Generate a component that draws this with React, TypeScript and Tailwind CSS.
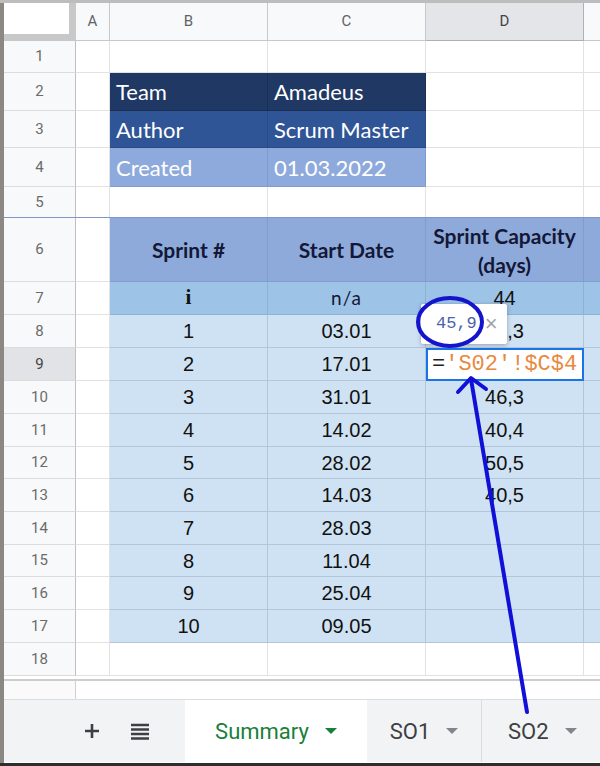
import type { ReactNode } from "react";

type Sprint = { n: number; date: string; cap: string; h: string };

// D9 is empty here: the cell editor draws it
const sprints: Sprint[] = [
  { n: 1, date: "03.01", cap: "45,3", h: "h-[33px]" },
  { n: 2, date: "17.01", cap: "", h: "h-[33px]" },
  { n: 3, date: "31.01", cap: "46,3", h: "h-[33px]" },
  { n: 4, date: "14.02", cap: "40,4", h: "h-[33px]" },
  { n: 5, date: "28.02", cap: "50,5", h: "h-[32px]" },
  { n: 6, date: "14.03", cap: "40,5", h: "h-[33px]" },
  { n: 7, date: "28.03", cap: "", h: "h-[33px]" },
  { n: 8, date: "11.04", cap: "", h: "h-[32px]" },
  { n: 9, date: "25.04", cap: "", h: "h-[33px]" },
  { n: 10, date: "09.05", cap: "", h: "h-[33px]" },
];

const info = [
  { label: "Team", value: "Amadeus", h: "h-[38px]", bg: "bg-[#1f3864]", line: "border-[#1a2f55]" },
  { label: "Author", value: "Scrum Master", h: "h-[37px]", bg: "bg-[#2f5597]", line: "border-[#284a85]" },
  { label: "Created", value: "01.03.2022", h: "h-[39px]", bg: "bg-[#8eaadc]", line: "border-[#7f9bd0]" },
];

function RowHead({ n, active }: { n: number; active?: boolean }) {
  return (
    <div
      className={`w-[72px] shrink-0 flex items-center justify-center border-r border-b border-r-[#c0c0c0] border-b-[#dcdcdc] text-[15px] font-['Roboto',Arial,sans-serif] ${
        active ? "bg-[#e1e3e6] text-[#444]" : "bg-[#f8f9fa] text-[#6b6b6b]"
      }`}
    >
      {n}
    </div>
  );
}

function Blank({ w }: { w: string }) {
  return <div className={`${w} shrink-0 bg-white border-r border-b border-[#e2e2e2]`} />;
}

function BlankRow({ n, h }: { n: number; h: string }) {
  return (
    <div className={`flex ${h}`}>
      <RowHead n={n} />
      <Blank w="w-[34px]" />
      <Blank w="w-[158px]" />
      <Blank w="w-[158px]" />
      <Blank w="w-[158px]" />
      <div className="flex-1 bg-white border-b border-[#e2e2e2]" />
    </div>
  );
}

function Tcell({ w, className, children }: { w: string; className: string; children?: ReactNode }) {
  return (
    <div className={`${w} shrink-0 flex items-center justify-center border-r border-b ${className}`}>
      {children}
    </div>
  );
}

function Caret({ color }: { color: string }) {
  return (
    <svg width="12" height="6" viewBox="0 0 12 6">
      <polygon points="0,0 12,0 6,6" fill={color} />
    </svg>
  );
}

export default function App() {
  return (
    <div className="relative w-[600px] h-[766px] overflow-hidden bg-[#8b8782] flex flex-col font-['Liberation_Sans',Arial,sans-serif]">
      <div className="h-[3px] shrink-0 bg-[#bdbdbd]" />
      <div className="flex-1 flex">
        <div className="w-[4px] shrink-0 bg-[#8b8782]" />
        <div className="flex-1 flex flex-col bg-white">
          {/* Column headers */}
          <div className="flex h-[38px] text-[15px] text-[#5f6368] font-['Roboto',Arial,sans-serif]">
            <div className="w-[72px] shrink-0 bg-white border-r-[7px] border-b-[7px] border-[#c8c8c8]" />
            <div className="w-[34px] shrink-0 flex items-center justify-center bg-[#f8f9fa] border-r border-b border-[#c8c8c8]">A</div>
            <div className="w-[158px] shrink-0 flex items-center justify-center bg-[#f8f9fa] border-r border-b border-[#c8c8c8]">B</div>
            <div className="w-[158px] shrink-0 flex items-center justify-center bg-[#f8f9fa] border-r border-b border-[#c8c8c8]">C</div>
            <div className="w-[158px] shrink-0 flex items-center justify-center bg-[#e3e5e8] border-r border-b border-[#b0b0b0] text-[#444]">D</div>
            <div className="flex-1 bg-[#f8f9fa] border-b border-[#c8c8c8]" />
          </div>

          <BlankRow n={1} h="h-[32px]" />

          {/* Info block B2:C4 */}
          {info.map((r, i) => (
            <div key={r.label} className={`flex ${r.h}`}>
              <RowHead n={i + 2} />
              <Blank w="w-[34px]" />
              <div className={`w-[158px] shrink-0 flex items-center pl-[6px] border-r border-b ${r.bg} ${r.line} text-white text-[22px] font-['Lato',sans-serif]`}>
                {r.label}
              </div>
              <div className={`w-[158px] shrink-0 flex items-center pl-[6px] border-r border-b ${r.bg} ${r.line} text-white text-[22px] font-['Lato',sans-serif]`}>
                {r.value}
              </div>
              <Blank w="w-[158px]" />
              <div className="flex-1 bg-white border-b border-[#e2e2e2]" />
            </div>
          ))}

          <BlankRow n={5} h="h-[31px]" />

          {/* Sprint table header */}
          <div className="flex h-[65px] border-t border-[#7d97c8] -mt-px">
            <RowHead n={6} />
            <Blank w="w-[34px]" />
            <Tcell w="w-[158px]" className="bg-[#8eaadb] border-[#809dd0] text-[#141836] font-bold text-[21px] font-['Lato',sans-serif]">
              Sprint #
            </Tcell>
            <Tcell w="w-[158px]" className="bg-[#8eaadb] border-[#809dd0] text-[#141836] font-bold text-[21px] font-['Lato',sans-serif]">
              Start Date
            </Tcell>
            <Tcell w="w-[158px]" className="bg-[#8eaadb] border-[#809dd0] text-[#141836] font-bold text-[21px] leading-[29px] text-center font-['Lato',sans-serif]">
              Sprint Capacity
              <br />
              (days)
            </Tcell>
            <div className="flex-1 bg-[#8eaadb] border-b border-[#809dd0]" />
          </div>

          {/* Row 7 */}
          <div className="flex h-[33px]">
            <RowHead n={7} />
            <Blank w="w-[34px]" />
            <Tcell w="w-[158px]" className="bg-[#9dc3e6] border-[#8cb2d6] text-[#111] font-bold text-[21px] font-['Liberation_Serif',serif]">
              i
            </Tcell>
            <Tcell w="w-[158px]" className="bg-[#9dc3e6] border-[#8cb2d6] text-[#141836] text-[19px] tracking-[1px] font-['Lato',sans-serif]">
              n/a
            </Tcell>
            <Tcell w="w-[158px]" className="bg-[#9dc3e6] border-[#8cb2d6] text-[#111] text-[20px]">
              44
            </Tcell>
            <div className="flex-1 bg-[#9dc3e6] border-b border-[#8cb2d6]" />
          </div>

          {/* Sprints */}
          {sprints.map((s, i) => (
            <div key={s.n} className={`flex ${s.h}`}>
              <RowHead n={i + 8} active={i === 1} />
              <Blank w="w-[34px]" />
              <Tcell w="w-[158px]" className="bg-[#cfe2f3] border-[#b3c5d8] text-[#111] text-[20px]">
                {s.n}
              </Tcell>
              <Tcell w="w-[158px]" className="bg-[#cfe2f3] border-[#b3c5d8] text-[#111] text-[20px]">
                {s.date}
              </Tcell>
              {i === 1 ? (
                <div className="w-[158px] shrink-0 flex items-center pl-[4px] bg-white border-2 border-[#1a73e8] text-[22px] font-['Liberation_Mono',monospace]">
                  <span className="text-[#222]">=</span>
                  <span className="text-[#e8893f]">'S02'!$C$4</span>
                </div>
              ) : (
                <Tcell w="w-[158px]" className="bg-[#cfe2f3] border-[#b3c5d8] text-[#111] text-[20px]">
                  {s.cap}
                </Tcell>
              )}
              <div className="flex-1 bg-[#cfe2f3] border-b border-[#b3c5d8]" />
            </div>
          ))}

          <BlankRow n={18} h="h-[33px]" />

          {/* Scroll edge */}
          <div className="h-[5px] shrink-0 bg-white border-b-2 border-[#cdcdcd]" />
          <div className="h-[18px] shrink-0 flex">
            <div className="w-[72px] border-r border-[#d0d0d0] bg-[#fafafa]" />
            <div className="flex-1 bg-white" />
          </div>

          {/* Sheet tabs */}
          <div className="h-[63px] shrink-0 flex bg-[#f1f3f4] border-t border-[#dadce0] text-[22px] font-['Roboto',Arial,sans-serif]">
            <div className="w-[181px] shrink-0 flex items-center pl-[80px] gap-[31px]">
              <svg width="16" height="16" viewBox="0 0 16 16">
                <path d="M8 1v14M1 8h14" stroke="#3c4043" strokeWidth="2.6" />
              </svg>
              <svg width="18" height="17" viewBox="0 0 18 17">
                <path d="M0 2h18M0 6.5h18M0 11h18M0 15.5h18" stroke="#3c4043" strokeWidth="2.4" />
              </svg>
            </div>
            <div className="w-[182px] shrink-0 flex items-center justify-center gap-[16px] bg-white text-[#188038]">
              <span>Summary</span>
              <Caret color="#188038" />
            </div>
            <div className="w-[115px] shrink-0 flex items-center justify-center gap-[16px] border-r border-[#dadce0] text-[#3c4043]">
              <span>SO1</span>
              <Caret color="#80868b" />
            </div>
            <div className="flex-1 flex items-center pl-[26px] gap-[16px] text-[#3c4043]">
              <span>SO2</span>
              <Caret color="#80868b" />
            </div>
          </div>
        </div>
      </div>
      <div className="h-[3px] shrink-0 bg-[#2e2e2e]" />

      {/* Value preview tooltip over D8 */}
      <div className="absolute left-[421px] top-[304px] w-[86px] h-[40px] bg-white rounded-[2px] shadow-[0_1px_4px_rgba(0,0,0,0.3)] flex items-center pl-[15px] gap-[8px]">
        <span className="text-[17px] text-[#4a62ad] font-['Liberation_Mono',monospace]">45,9</span>
        <span className="text-[22px] leading-none text-[#a0a4a8]">×</span>
      </div>

      {/* Hand-drawn annotation */}
      <svg className="absolute left-0 top-0 pointer-events-none" width="600" height="766" viewBox="0 0 600 766">
        <ellipse cx="450" cy="322" rx="32" ry="24" fill="none" stroke="#1414cc" strokeWidth="4" />
        <path d="M527 712 L471 379" stroke="#1010d8" strokeWidth="4" strokeLinecap="round" />
        <path d="M458 392 L471 378 L486 389" fill="none" stroke="#1010d8" strokeWidth="4" strokeLinecap="round" strokeLinejoin="round" />
      </svg>
    </div>
  );
}
